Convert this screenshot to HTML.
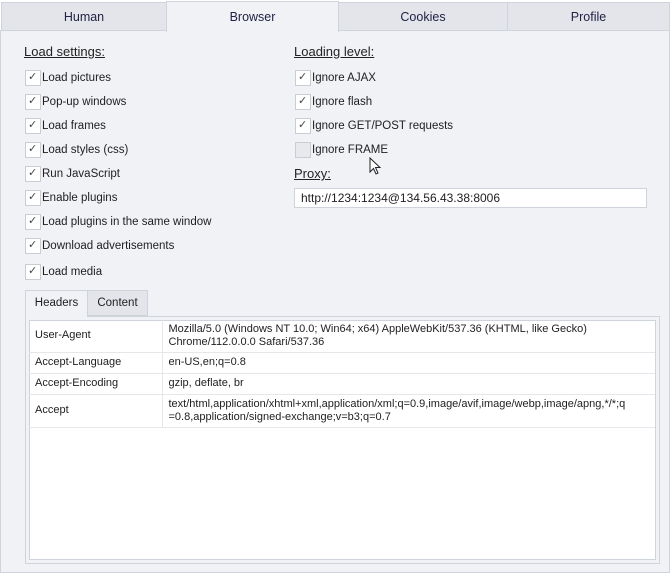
<!DOCTYPE html>
<html><head><style>
*{box-sizing:border-box;margin:0;padding:0}
body{width:671px;height:573px;background:#fff;font-family:"Liberation Sans","DejaVu Sans",sans-serif;font-size:11.5px;color:#1e1e1e;position:relative;overflow:hidden}
.abs{position:absolute}
.tab{position:absolute;top:2px;height:29px;background:#e4e5ea;border:1px solid #cfd3da;text-align:center;line-height:28px;font-size:12.5px;color:#222246}
.panel{position:absolute;left:0;top:30px;width:670px;height:543px;background:#f1f2f6;border:1px solid #cfd3da}
.h{position:absolute;font-size:13px;text-decoration:underline;color:#222}
.cb{position:absolute;height:16px;line-height:16px;padding-left:17px;white-space:nowrap}
.cb:before{content:"";position:absolute;left:0;top:0;width:14px;height:14px;background:#fff;border:1px solid #c9ccd3}
.cb.c:after{content:"✓";position:absolute;left:3px;top:-1px;font-size:11px;color:#444;font-family:"DejaVu Sans",sans-serif}
.cb.d:before{background:#e8e9ed}
table{border-collapse:collapse;position:absolute;left:29px;top:320px;width:626px}
td{border-bottom:1px solid #e6e7ea;padding:0 6px;vertical-align:middle;line-height:13px;font-size:11px}
td:first-child{width:133px;border-right:1px solid #e6e7ea}
</style></head><body>
<div class="panel"></div>
<div class="tab" style="left:1px;width:166px">Human</div>
<div class="tab" style="left:166px;top:1px;height:31px;width:173px;background:#f1f2f6;border-bottom:none;line-height:30px">Browser</div>
<div class="tab" style="left:338px;width:170px">Cookies</div>
<div class="tab" style="left:507px;width:163px">Profile</div>

<div class="h" style="left:24px;top:44px">Load settings:</div>
<div class="h" style="left:294px;top:44px">Loading level:</div>

<div class="cb c" style="left:25px;top:70px">Load pictures</div>
<div class="cb c" style="left:25px;top:94px">Pop-up windows</div>
<div class="cb c" style="left:25px;top:118px">Load frames</div>
<div class="cb c" style="left:25px;top:142px">Load styles (css)</div>
<div class="cb c" style="left:25px;top:166px">Run JavaScript</div>
<div class="cb c" style="left:25px;top:190px">Enable plugins</div>
<div class="cb c" style="left:25px;top:214px">Load plugins in the same window</div>
<div class="cb c" style="left:25px;top:238px">Download advertisements</div>
<div class="cb c" style="left:25px;top:264px">Load media</div>

<div class="cb c" style="left:295px;top:70px">Ignore AJAX</div>
<div class="cb c" style="left:295px;top:94px">Ignore flash</div>
<div class="cb c" style="left:295px;top:118px">Ignore GET/POST requests</div>
<div class="cb d" style="left:295px;top:142px">Ignore FRAME</div>
<svg class="abs" style="left:369px;top:157px" width="14" height="20" viewBox="0 0 14 20"><path d="M1 1 L1 15 L4.5 11.5 L7 17 L9 16 L6.5 10.5 L11 10.5 Z" fill="#fff" stroke="#222" stroke-width="1"/></svg>

<div class="h" style="left:294px;top:166px">Proxy:</div>
<div class="abs" style="left:294px;top:188px;width:353px;height:20px;background:#fff;border:1px solid #cfd3da;line-height:18px;padding-left:6px;font-size:12px">http://1234:1234@134.56.43.38:8006</div>

<div class="abs" style="left:25px;top:316px;width:635px;height:248px;border:1px solid #cfd3da;background:#f1f2f6"></div>
<div class="abs" style="left:29px;top:320px;width:627px;height:240px;border:1px solid #cfd3da;background:#fff"></div>
<div class="abs" style="left:25px;top:290px;width:63px;height:27px;background:#f1f2f6;border:1px solid #cfd3da;border-bottom:none;text-align:center;line-height:25px">Headers</div>
<div class="abs" style="left:87px;top:290px;width:61px;height:26px;background:#e4e5ea;border:1px solid #cfd3da;text-align:center;line-height:25px">Content</div>

<table>
<tr style="height:32px"><td>User-Agent</td><td>Mozilla/5.0 (Windows NT 10.0; Win64; x64) AppleWebKit/537.36 (KHTML, like Gecko)<br>Chrome/112.0.0.0 Safari/537.36</td></tr>
<tr style="height:21px"><td>Accept-Language</td><td>en-US,en;q=0.8</td></tr>
<tr style="height:21px"><td>Accept-Encoding</td><td>gzip, deflate, br</td></tr>
<tr style="height:33px"><td>Accept</td><td>text/html,application/xhtml+xml,application/xml;q=0.9,image/avif,image/webp,image/apng,*/*;q<br>=0.8,application/signed-exchange;v=b3;q=0.7</td></tr>
</table>
</body></html>
